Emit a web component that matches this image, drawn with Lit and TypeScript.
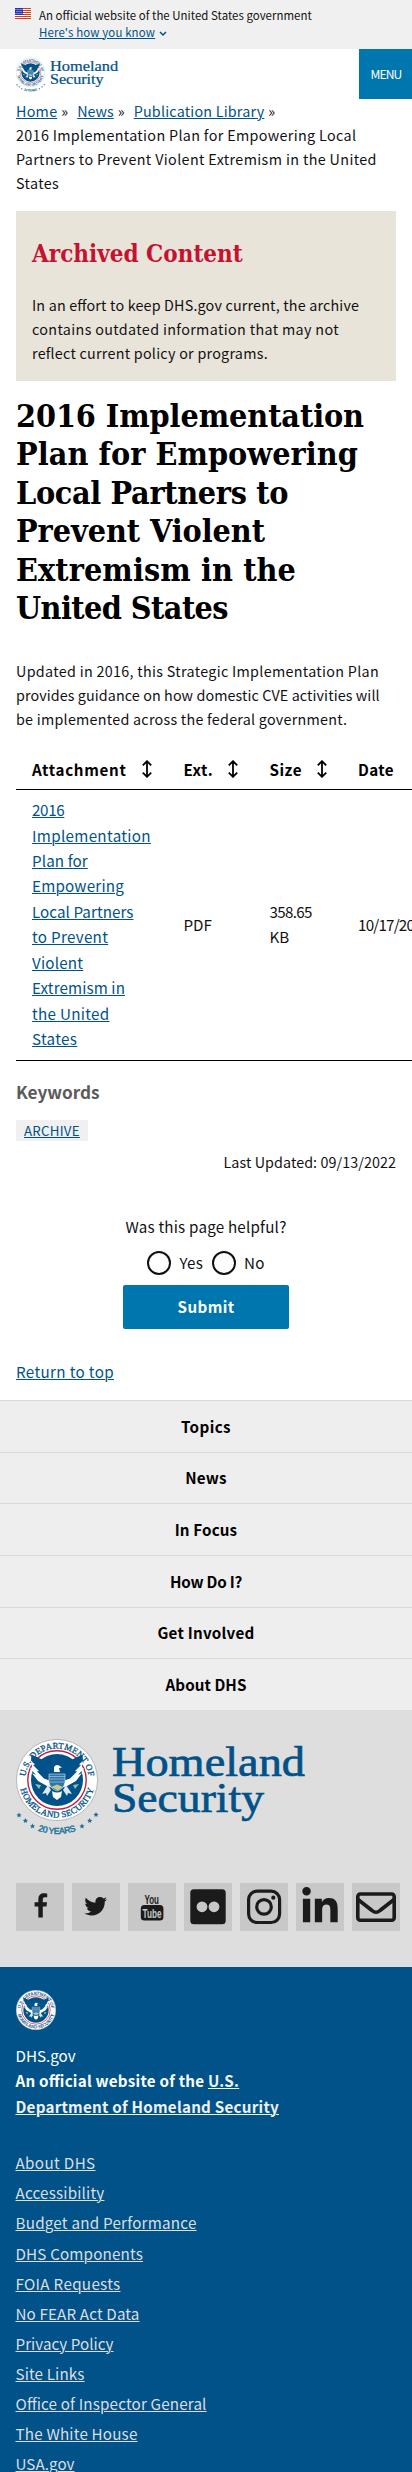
import { LitElement, html, svg, css } from "lit";
import { customElement, property } from "lit/decorators.js";

const seal = () => svg`
  <circle cx="41" cy="41" r="40.6" fill="#fff" stroke="#b4b8bd" stroke-width="1"/>
  <circle cx="41" cy="41" r="29.2" fill="#fff" stroke="#c41e3a" stroke-width="1.4"/>
  <circle cx="41" cy="41" r="26" fill="#005288"/>
  <path d="M16.6 17.5L28 26l3 9 5 6 1 8-6-2-9-5-6-8 4 2-6-7 4 1-4-7 4 1zM65.400 17.500L54 26l-3 9-5 6-1 8 6-2 9-5 6-8-4 2 6-7-4 1 4-7-4 1z" fill="#fff"/>
  <path d="M15.500 15.500L28 21.500l4 9 5 5-1 7-8-3-7-7 2-.5-6-6 2-.5-4-4zM66.500 15.500L54 21.500l-4 9-5 5 1 7 8-3 7-7-2-.5 6-6-2-.5 4-4z" fill="#005288"/>
  <path d="M38 28q2-3 5-1.500l3 2-3 .5 1 4h-6z" fill="#fff"/>
  <path d="M33 35h16v8q-1 7-8 9-7-2-8-9z" fill="#2b75a8" stroke="#fff" stroke-width=".5"/>
  <path d="M33 37.500h16M33 40h16M34 43h14" stroke="#c5d8e6" stroke-width=".6"/>
  <path d="M35 48l6-2.500 6 2.500-5 3.500z" fill="#c9c98a"/>
  <path d="M36 52q5 3 10 0l-1 6-4 3-4-3z" fill="#fff"/>
  <path d="M32 46l-6 9 4-1 1 3 4-6zM50 46l6 9-4-1-1 3-4-6z" fill="#dbe8f0"/>
  <path d="M19 45l6 1-2 4zM63 45l-6 1 2 4z" fill="#8fc1a8"/>
  <path id="upper" d="M9.700 47 A31.800 31.800 0 1 1 72.300 47" fill="none"/>
  <path id="lower" d="M3.300 41 A37.700 37.700 0 0 0 78.700 41" fill="none"/>
  <g font-family="Liberation Serif, serif" font-size="8.800" fill="#005288" stroke="#005288" stroke-width=".3" text-anchor="middle">
    <text><textPath href="#upper" startOffset="50%" textLength="92">U.S. DEPARTMENT OF</textPath></text>
    <text><textPath href="#lower" startOffset="50%" textLength="100">HOMELAND SECURITY</textPath></text>
  </g>`;

const stars = [[3, 76], [9.4, 81.5], [16.5, 87], [66, 87], [73.7, 81.5], [80, 75.5]];

@customElement("dhs-seal")
class DhsSeal extends LitElement {
  static styles = css`:host{display:block;width:40px;height:40px}svg{display:block;width:100%;height:100%}`;
  render() { return html`<svg viewBox="0 0 82 82">${seal()}</svg>`; }
}

@customElement("dhs-logo")
class DhsLogo extends LitElement {
  static styles = css`:host{display:block}svg{display:block;width:100%;height:auto;overflow:visible}`;
  render() {
    return html`<svg viewBox="0 0 290 98">
      ${seal()}
      ${stars.map(([x, y]) => svg`<path transform="translate(${x} ${y})" d="M0-2.600L.8-.8 2.600-.6 1.200.7 1.600 2.500 0 1.500-1.600 2.500-1.200.7-2.600-.6-.8-.8z" fill="#1a7095"/>`)}
      <path id="years" d="M10 86.500 Q41 103.500 72 86.500" fill="none"/>
      <text font-family="Liberation Sans, sans-serif" font-size="8.800" fill="#1a7095" stroke="#1a7095" stroke-width=".4" text-anchor="middle"><textPath href="#years" startOffset="50%" textLength="39">20 YEARS</textPath></text>
      <g font-family="Liberation Serif, serif" fill="#005288" stroke="#005288" stroke-width=".7">
        <text x="96" y="37" font-size="43" textLength="193" lengthAdjust="spacingAndGlyphs">Homeland</text>
        <text x="96" y="73" font-size="43" textLength="152" lengthAdjust="spacingAndGlyphs">Security</text>
      </g>
    </svg>`;
  }
}

const socialArt: Record<string, unknown> = {
  facebook: svg`<path transform="translate(11.600 10.300) scale(.01460)" d="M1343 12v264h-157q-86 0-116 36t-30 108v189h293l-39 296h-254v759h-306v-759h-255v-296h255v-218q0-186 104-288.500t277-102.500q147 0 228 12z"/>`,
  twitter: svg`<path transform="translate(12.300 11.800) scale(.0445)" d="M459.370 151.716c.325 4.548.325 9.097.325 13.645 0 138.720-105.583 298.558-298.558 298.558-59.452 0-114.680-17.219-161.137-47.106 8.447.974 16.568 1.299 25.340 1.299 49.055 0 94.213-16.568 130.274-44.832-46.132-.975-84.792-31.188-98.112-72.772 6.498.974 12.995 1.624 19.818 1.624 9.421 0 18.843-1.300 27.614-3.573-48.081-9.747-84.143-51.980-84.143-102.985v-1.299c13.969 7.797 30.214 12.670 47.431 13.319-28.264-18.843-46.781-51.005-46.781-87.391 0-19.492 5.197-37.360 14.294-52.954 51.655 63.675 129.300 105.258 216.365 109.807-1.624-7.797-2.599-15.918-2.599-24.040 0-57.828 46.782-104.934 104.934-104.934 30.213 0 57.502 12.670 76.670 33.137 23.715-4.548 46.456-13.320 66.599-25.340-7.798 24.366-24.366 44.833-46.132 57.827 21.117-2.273 41.584-8.122 60.426-16.243-14.292 20.791-32.161 39.308-52.628 54.253z"/>`,
  youtube: svg`<rect x="12.800" y="22" width="22.600" height="15.600" rx="3.500"/>
    <g font-family="Liberation Sans, sans-serif" font-weight="bold"><text x="16.500" y="20.600" font-size="13" textLength="14.500" lengthAdjust="spacingAndGlyphs">You</text>
    <text x="14.600" y="34.700" font-size="12.500" textLength="19" lengthAdjust="spacingAndGlyphs" fill="#c8c8c8">Tube</text></g>`,
  flickr: svg`<rect x="6.300" y="6.200" width="35.400" height="35" rx="3.500"/><circle cx="18" cy="23.800" r="5.400" fill="#c8c8c8"/><circle cx="30" cy="23.800" r="5.400" fill="#c8c8c8"/>`,
  instagram: svg`<rect x="8.600" y="8.100" width="31" height="31.400" rx="8.500" fill="none" stroke="#1b1b1b" stroke-width="3.200"/><circle cx="24" cy="23.900" r="7.300" fill="none" stroke="#1b1b1b" stroke-width="3.200"/><circle cx="33.300" cy="14.700" r="2.100"/>`,
  linkedin: svg`<path transform="translate(6.300 3.900) scale(.0790)" d="M100.280 448H7.400V148.900h92.880zM53.790 108.100C24.090 108.100 0 83.500 0 53.800a53.790 53.790 0 0 1 107.580 0c0 29.700-24.100 54.300-53.790 54.300zM447.900 448h-92.680V302.400c0-34.700-.7-79.200-48.290-79.200-48.290 0-55.690 37.700-55.690 76.700V448h-92.780V148.900h89.080v40.800h1.300c12.400-23.500 42.690-48.300 87.880-48.300 94 0 111.280 61.900 111.280 142.300V448z"/>`,
  email: svg`<rect x="5.800" y="11" width="36.400" height="26.200" rx="2.500" fill="none" stroke="#1b1b1b" stroke-width="3.600"/><path d="M6 16.500L20 27.500Q24 31 28 27.500L42 16.500" fill="none" stroke="#1b1b1b" stroke-width="3.600"/>`,
};

@customElement("social-tile")
class SocialTile extends LitElement {
  @property() name = "facebook";
  static styles = css`:host{display:block;width:48px;height:48px;background:#c8c8c8}svg{display:block;width:48px;height:48px}`;
  render() { return html`<svg viewBox="0 0 48 48" fill="#1b1b1b">${socialArt[this.name]}</svg>`; }
}

const sortIcon = html`<svg class="sort" viewBox="0 0 10 18"><path d="M5 1.500v15M.8 5.300L5 1.200l4.200 4.100M.8 12.700L5 16.800l4.200-4.100" fill="none" stroke="#000" stroke-width="1.800"/></svg>`;
const flag = html`<svg class="flag" viewBox="0 0 16 11"><path fill="#fff" d="M0 0h16v11H0z"/><path stroke="#db3e1f" stroke-width="1" d="M0 .5h16M0 2.500h16M0 4.500h16M0 6.500h16M0 8.500h16M0 10.500h16"/><path fill="#1e33b1" d="M0 0h8v7H0z"/><path stroke="#fff" stroke-width=".8" stroke-dasharray="1 1" d="M.5 1.500h7M1.500 3.500h6M.5 5.500h7"/></svg>`;

// A run of text paired with its tracking in pixels.
type Run = [string, number];
const run = ([text, tracking]: Run) => html`<span style="letter-spacing:${tracking}px">${text}</span>`;
const lines = (runs: Run[]) => runs.map((r) => html`<span class="line">${run(r)} </span>`);

const crumbs: Run[] = [["Home", 0.25], ["News", 0], ["Publication Library", 0.2]];
const current: Run[] = [["2016 Implementation Plan for Empowering Local", 0.34], ["Partners to Prevent Violent Extremism in the United", 0.37], ["States", 0.37]];
const notice: Run[] = [["In an effort to keep DHS.gov current, the archive", 0.17], ["contains outdated information that may not", 0.35], ["reflect current policy or programs.", 0.25]];
const title: Run[] = [["2016 Implementation", -0.08], ["Plan for Empowering", 0.05], ["Local Partners to", -0.33], ["Prevent Violent", -0.06], ["Extremism in the", 0.1], ["United States", -0.56]];
const intro: Run[] = [["Updated in 2016, this Strategic Implementation Plan", 0.31], ["provides guidance on how domestic CVE activities will", 0.09], ["be implemented across the federal government.", 0.25]];
const file: Run[] = [["2016", -0.35], ["Implementation", 0.32], ["Plan for", 0.1], ["Empowering", 0.2], ["Local Partners", 0.05], ["to Prevent", 0.3], ["Violent", 0.2], ["Extremism in", 0.11], ["the United", 0.3], ["States", 0.3]];
const sections: Run[] = [["Topics", 0.39], ["News", 0.2], ["In Focus", 0.13], ["How Do I?", -0.23], ["Get Involved", 0.23], ["About DHS", 0.07]];
const links: Run[] = [["About DHS", 0.36], ["Accessibility", 0.19], ["Budget and Performance", 0.23], ["DHS Components", 0.17], ["FOIA Requests", 0.31], ["No FEAR Act Data", 0.14], ["Privacy Policy", 0.03], ["Site Links", 0.13], ["Office of Inspector General", 0.16], ["The White House", 0.19], ["USA.gov", 0.05]];

@customElement("app-root")
class AppRoot extends LitElement {
  static styles = css`
    :host{display:block;width:100%;height:2472px;overflow:hidden;background:#fff;color:#111;
      --s16:14.330px;--s17:15.190px;font-feature-settings:"liga" 1;
      font-family:"Noto Sans CJK SC","Noto Sans",sans-serif;font-size:var(--s16);line-height:24px}
    *{box-sizing:border-box}
    h1,h2,h3,p,ul{margin:0;padding:0}
    .line{display:block;white-space:nowrap}
    a{color:#005288;text-decoration:underline;text-decoration-thickness:1px;text-underline-offset:1px}
    .banner{display:flex;height:49px;background:#f0f0f0;padding:7px 15px 0;font-size:11.450px;line-height:16.500px}
    .flag{width:16px;height:11px;margin:1px 8px 0 0}
    .chev{width:8px;height:6px;margin-left:4px}
    .head{display:flex;justify-content:space-between;height:50px;padding-left:16px}
    .head dhs-logo{width:102.500px;margin-top:8.500px}
    .menu{width:53px;background:#0076ae;color:#fff;border:0;font:12.100px/50px "Noto Sans CJK SC",sans-serif;letter-spacing:-.850px;padding:0 0 0 1px;text-align:center}
    main{padding:0 16px}
    .crumbs{height:112px}
    .crumbs a{margin-right:4px}
    .sep{margin-right:9px}
    .notice{height:170px;background:#e9e4da;padding:28px 16px 0}
    .serif{font-family:"DejaVu Serif Condensed","DejaVu Serif",serif;font-stretch:condensed;font-weight:bold}
    .notice h2{color:#c41230;font-size:24px;line-height:30px;margin-bottom:24px}
    h1{font-size:32px;line-height:38.400px;padding-top:16px;height:278px;color:#000}
    .frame{overflow:hidden;margin-right:-16px;padding-top:20px}
    .table{width:470px;font-size:var(--s17);line-height:25.440px}
    .row{display:grid;grid-template-columns:167.500px 86px 88.500px 128px;align-items:center;border-bottom:1px solid #000;padding-bottom:1.500px}
    .row:first-child{height:39px;font-weight:bold;color:#000}
    .row:last-child{height:271px}
    .row>div{display:flex;align-items:center}
    .row>div:first-child{padding-left:16px}
    .sort{flex:none;width:10px;height:18px;margin-left:15px}
    .date{margin-left:18px}
    .size{width:50px}
    h3{font-size:17.200px;line-height:26px;padding-top:18px;color:#5a5a5a}
    .tag{display:block;width:72px;height:21px;margin-top:15px;padding-left:8px;background:#f0f0f0;line-height:21px;font-size:13.300px;letter-spacing:.250px}
    .updated{text-align:right;margin-top:9px;letter-spacing:.070px}
    .poll{display:flex;flex-direction:column;align-items:center;margin-top:40px;font-size:var(--s17);letter-spacing:.200px}
    .opts{display:flex;height:24px;margin-top:13px;gap:9px;line-height:23px}
    .opts label{display:flex;gap:8px}
    .opts i{width:24px;height:24px;border:2px solid #111;border-radius:50%}
    .submit{width:166px;height:44px;margin-top:10px;padding:0 0 2px;border:0;border-radius:2px;background:#0076ae;color:#fff;font:bold 15.190px "Noto Sans CJK SC",sans-serif;letter-spacing:.400px}
    .top{display:block;margin-top:30px;height:41px;font-size:var(--s17);letter-spacing:.350px}
    .nav{display:grid;grid-template-rows:repeat(6,1fr);height:310px;background:#eee}
    .nav div{border-top:1px solid #d8d8d8;display:flex;align-items:center;justify-content:center;padding-bottom:1px;font-weight:bold;font-size:var(--s17);color:#000}
    .brand{height:257px;background:#dedede;padding:29px 16px 0}
    .brand dhs-logo{width:290px;height:98px}
    .social{display:flex;gap:8px;margin-top:46px}
    .ident{background:#005288;color:#fff;height:520px;padding:23px 15.500px 0;font-size:var(--s17);line-height:25.440px}
    .ident dhs-seal{margin-bottom:13px}
    .ident a{color:#dcdee0}
    .ident b{letter-spacing:.230px}
    .ident b a{color:#f0f0f0}
    .ident ul{list-style:none;margin-top:31px}
    .ident li{height:30.080px}
  `;
  render() {
    return html`
      <div class="banner">${flag}<div>${run(["An official website of the United States government", 0.03])}<br/><a>${run(["Here's how you know", 0.14])}</a><svg class="chev" viewBox="0 0 8 6"><path d="M1 1l3 3 3-3" fill="none" stroke="#005288" stroke-width="1.500"/></svg></div></div>
      <header class="head"><dhs-logo></dhs-logo><button class="menu">MENU</button></header>
      <main>
        <div class="crumbs">${crumbs.map((c) => html`<a>${run(c)}</a><span class="sep">»</span>`)}${lines(current)}</div>
        <section class="notice"><h2 class="serif">Archived Content</h2><p>${lines(notice)}</p></section>
        <h1 class="serif">${lines(title)}</h1>
        <p>${lines(intro)}</p>
        <div class="frame"><div class="table">
          <div class="row"><div>${run(["Attachment", 0.67])}${sortIcon}</div><div>${run(["Ext.", 0.4])}${sortIcon}</div><div>${run(["Size", 0.5])}${sortIcon}</div><div>${run(["Date", 0.38])}<span class="date"></span>${sortIcon}</div></div>
          <div class="row"><div><a>${lines(file)}</a></div><div>PDF</div><div><span class="size">${run(["358.65", -0.7])}<br/>KB</span></div><div>${run(["10/17/2016", -0.8])}</div></div>
        </div></div>
        <h3>Keywords</h3>
        <a class="tag">ARCHIVE</a>
        <p class="updated">Last Updated: 09/13/2022</p>
        <div class="poll"><div>Was this page helpful?</div><div class="opts"><label><i></i>Yes</label><label><i></i>No</label></div><button class="submit">Submit</button></div>
        <a class="top">Return to top</a>
      </main>
      <nav class="nav">${sections.map((s) => html`<div>${run(s)}</div>`)}</nav>
      <section class="brand"><dhs-logo></dhs-logo><div class="social">${Object.keys(socialArt).map((n) => html`<social-tile name=${n}></social-tile>`)}</div></section>
      <footer class="ident"><dhs-seal></dhs-seal><div>DHS.gov</div><b>An official website of the <a>U.S.<br/>Department of Homeland Security</a></b>
        <ul>${links.map((l) => html`<li><a>${run(l)}</a></li>`)}</ul>
      </footer>`;
  }
}
